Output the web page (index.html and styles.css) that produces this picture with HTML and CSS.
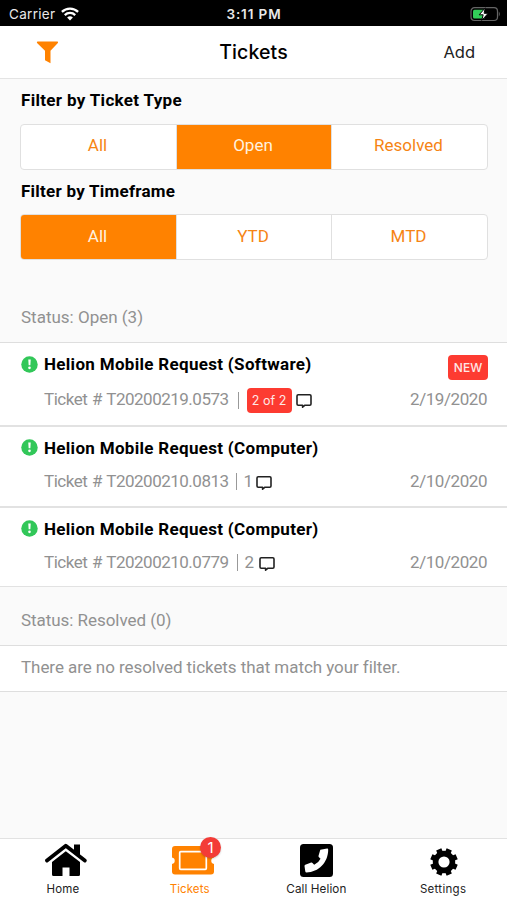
FILE: index.html
```html
<!DOCTYPE html>
<html lang="en">
<head>
<meta charset="utf-8">
<title>Tickets</title>
<link rel="stylesheet" href="styles.css">
</head>
<body>
<svg class="defs" width="0" height="0">
  <symbol id="alert" viewBox="0 0 18 18"><circle cx="9" cy="9" r="8.7" fill="#32c759"/><path d="M7.7 3.8h2.6l-.4 6.1H8.1z" fill="#fff"/><circle cx="9" cy="12.5" r="1.4" fill="#fff"/></symbol>
  <symbol id="bubble" viewBox="0 0 16 16"><path d="M2.2 1.800h11.600q1.200 0 1.200 1.200v8q0 1.200-1.200 1.200H9l-2.400 2v-2H2.200Q1 12.200 1 11V3q0-1.200 1.200-1.200z" fill="none" stroke="#222" stroke-width="1.600" stroke-linejoin="round"/></symbol>
</svg>
<div class="app">
  <div class="statusbar">
    <div class="carrier"><span>Carrier</span>
      <svg width="18" height="14" viewBox="0 0 18 14"><g fill="none" stroke="#fff" stroke-width="2.300"><path d="M.9 4.900a11.700 11.700 0 0 1 16.200 0"/><path d="M3.800 8.100a7.400 7.400 0 0 1 10.400 0"/></g><path d="M9 13.600 6.100 10.600a4.200 4.200 0 0 1 5.800 0z" fill="#fff"/></svg>
    </div>
    <div class="clock">3:11 PM</div>
    <div class="battery"><svg width="31" height="16" viewBox="0 0 31 16"><rect x="1" y="1.700" width="26.500" height="12.800" rx="3.500" fill="none" stroke="#656565" stroke-width="1.200"/><rect x="3" y="3.700" width="12" height="8.800" rx="1.500" fill="#32d059"/><path d="M28.800 5.500q2 2.500 0 5z" fill="#656565"/><path d="M15.300 1.800 9.200 8.800h4l-1.500 5.600 6.500-7.100h-4.100z" fill="#fff" stroke="#000" stroke-width="1"/></svg></div>
  </div>
  <header class="nav">
    <div class="nav-filter"><svg width="24" height="24" viewBox="0 0 24 24"><path d="M1.300 1.500h20.400l.4 1.200-7.600 8v12.600L9 20.300v-9.600L.8 2.700z" fill="#ff8200"/></svg></div>
    <h1 class="nav-title">Tickets</h1>
    <div class="nav-add">Add</div>
  </header>
  <main class="content">
    <section class="filters">
      <h2 class="filter-label type">Filter by Ticket Type</h2>
      <div class="segment"><div>All</div><div class="on">Open</div><div>Resolved</div></div>
      <h2 class="filter-label time">Filter by Timeframe</h2>
      <div class="segment range"><div class="on">All</div><div>YTD</div><div>MTD</div></div>
    </section>
    <div class="group open"><span>Status: Open (3)</span></div>
    <article class="ticket first">
      <div class="line top"><svg class="alert"><use href="#alert"/></svg><h3 class="soft">Helion Mobile Request (Software)</h3><span class="badge new">NEW</span></div>
      <div class="line meta"><span class="num">Ticket # T20200219.0573</span><i class="bar"></i><span class="badge count">2 of 2</span><svg class="bubble"><use href="#bubble"/></svg><time>2/19/2020</time></div>
    </article>
    <article class="ticket second">
      <div class="line top"><svg class="alert"><use href="#alert"/></svg><h3>Helion Mobile Request (Computer)</h3></div>
      <div class="line meta"><span class="num">Ticket # T20200210.0813</span><i class="bar"></i><span class="one">1</span><svg class="bubble"><use href="#bubble"/></svg><time>2/10/2020</time></div>
    </article>
    <article class="ticket third">
      <div class="line top"><svg class="alert"><use href="#alert"/></svg><h3>Helion Mobile Request (Computer)</h3></div>
      <div class="line meta"><span class="num">Ticket # T20200210.0779</span><i class="bar"></i><span class="two">2</span><svg class="bubble"><use href="#bubble"/></svg><time>2/10/2020</time></div>
    </article>
    <div class="group resolved"><span>Status: Resolved (0)</span></div>
    <p class="empty"><span>There are no resolved tickets that match your filter.</span></p>
  </main>
  <nav class="tabs">
    <div class="tab"><div class="icon"><svg width="42" height="34" viewBox="0 0 42 34"><path d="M2 17.500 20.800 2.800 39.800 17.500" fill="none" stroke="#000" stroke-width="3.800" stroke-linecap="round" stroke-linejoin="round"/><path d="M29 1.500h6V14l-6-5z" fill="#000"/><path d="M7 19 20.800 8.200 35 19v12.500q0 1.500-1.500 1.500h-9v-8.500h-7V33h-9Q7 33 7 31.500z" fill="#000"/></svg></div><span class="t-home">Home</span></div>
    <div class="tab active"><div class="icon"><svg width="42" height="29" viewBox="0 0 42 29"><path d="M3 0h36q3 0 3 3v8.500a3.300 3.300 0 0 0 0 6.500v7.500q0 3-3 3H3q-3 0-3-3V18a3.300 3.300 0 0 0 0-6.500V3q0-3 3-3z" fill="#ff8200"/><rect x="7.700" y="5.700" width="26.600" height="17.600" rx="1" fill="none" stroke="#fff" stroke-width="1.700"/></svg><b class="dot">1</b></div><span class="t-tickets">Tickets</span></div>
    <div class="tab"><div class="icon"><svg width="33" height="33" viewBox="0 0 33 33"><rect width="33" height="33" rx="3.500" fill="#000"/><path d="M20.300 5.700 27.200 4.600q1 0 1 1.200C28.200 18.500 18.500 28.300 6.500 28.500q-1 0-1.200-1L4.500 22q0-.8.800-1.200l5.900-2.300q.8-.2 1.300.4l1.700 1.900q4.500-2 6.300-6l-1.700-1.900q-.6-.6-.2-1.400z" fill="#fff"/></svg></div><span class="t-call">Call Helion</span></div>
    <div class="tab"><div class="icon"><svg width="28" height="28" viewBox="-14 -14 28 28"><circle r="8.400" fill="none" stroke="#000" stroke-width="5.600"/><g fill="none" stroke="#000" stroke-width="5.600"><path d="M0-9V-13.700M0 9V13.700M-9 0H-13.700M9 0H13.700M-6.400-6.400-9.700-9.700M6.400-6.400 9.700-9.700M-6.400 6.400-9.700 9.700M6.400 6.400 9.700 9.700" transform="rotate(22.500)"/></g></svg></div><span class="t-settings">Settings</span></div>
  </nav>
</div>
</body>
</html>
```
FILE: styles.css
```css
* { box-sizing: border-box; }
body { margin: 0; }
h1, h2, h3, p { margin: 0; }
.defs { display: none; }
.app { width: 507px; height: 900px; display: flex; flex-direction: column; background: #fafafa; font-family: Roboto, sans-serif; font-size: 17px; color: #000; white-space: nowrap; overflow: hidden; }
.statusbar { height: 26px; flex: none; background: #000; color: #e8e8e8; display: grid; grid-template-columns: 1fr auto 1fr; align-items: center; padding: 1px 6px 0 9px; font-family: Inter, sans-serif; font-size: 13.500px; letter-spacing: .3px; }
.carrier { display: flex; align-items: center; gap: 6px; }
.clock { font-weight: 600; font-size: 13.500px; letter-spacing: .9px; position: relative; left: -1px; }
.battery { display: flex; justify-content: flex-end; }
.nav { height: 53px; flex: none; background: #fff; border-bottom: 1px solid #e4e4e4; display: grid; grid-template-columns: 1fr auto 1fr; align-items: center; padding: 0 32px 0 36px; font-family: Inter, sans-serif; }
.nav-filter, .nav-filter svg { display: block; }
.nav-title { font-size: 19.500px; font-weight: 500; letter-spacing: .1px; position: relative; left: -2px; }
.nav-add { text-align: right; font-size: 16.500px; color: #222; }
.content { flex: 1; display: flex; flex-direction: column; }
.filters { padding: 0 19px 0 20px; }
.filter-label { font-size: 17px; font-weight: 700; letter-spacing: .32px; padding-left: 1px; height: 45px; line-height: 43px; }
.segment { height: 46px; display: grid; grid-template-columns: 155px 155px 156px; border: 1px solid #e0e0e0; border-radius: 4px; background: #fff; overflow: hidden; color: #f68413; text-align: center; line-height: 40px; font-size: 17px; }
.segment div { padding-right: 2px; }
.segment.range { line-height: 42px; }
.segment div + div { border-left: 1px solid #e0e0e0; }
.segment .on { background: #ff8200; color: #fff1df; }
.filter-label.time { height: 45px; line-height: 42px; letter-spacing: .25px; margin-bottom: -1px; }
.group { flex: none; color: #919191; padding-left: 21px; border-bottom: 1px solid #dedede; }
.group.open { height: 83px; line-height: 115px; }
.group.resolved { height: 59px; line-height: 66px; letter-spacing: -.05px; }
.ticket { flex: none; background: #fff; border-bottom: 2px solid #e2e2e2; padding: 0 20px 0 21px; }
.ticket.first { height: 84px; }
.ticket.second { height: 81px; }
.ticket.third { height: 79px; border-bottom-width: 1px; }
.line { display: flex; align-items: center; }
.top { height: 42px; }
.second .top, .third .top { height: 41px; }
.alert { width: 17px; height: 17px; margin-right: 6px; }
h3 { font-size: 17px; font-weight: 700; letter-spacing: .31px; }
.badge { background: #fd3b31; color: #ffe8e6; border-radius: 4px; height: 25px; line-height: 26px; font-size: 12.500px; text-align: center; font-family: Inter, sans-serif; }
.new { width: 40px; margin-left: auto; margin-right: -1px; margin-top: 7px; font-weight: 500; font-size: 12px; }
.meta { height: 30px; padding-left: 23px; color: #919191; }
.num, time { letter-spacing: -.44px; }
.num { word-spacing: 1px; letter-spacing: -.5px; }
.first .num, .first time { margin-top: -2px; }
.second .meta, .third .meta { height: 26px; }
.bar { width: 1px; height: 17px; background: #999; margin: 0 7px 0 9px; }
.second .bar { margin-left: 7px; }
.third .bar { margin-left: 8px; }
.count { width: 45px; margin-left: 1px; margin-right: 4px; }
.one { margin-right: 3px; }
.two { margin-right: 5px; }
.bubble { width: 16px; height: 16px; margin-top: 3px; }
.first .bubble { margin-top: 1px; }
time { margin-left: auto; }
.empty { height: 46px; background: #fff; border-bottom: 1px solid #dedede; color: #919191; padding-left: 21px; line-height: 42px; letter-spacing: -.06px; }
.tabs { height: 62px; flex: none; background: #fff; border-top: 1px solid #e2e2e2; display: grid; grid-template-columns: repeat(4, 1fr); font-family: Inter, sans-serif; font-size: 11.500px; color: #222; }
.tab { display: flex; flex-direction: column; align-items: center; }
.icon { height: 42px; display: flex; align-items: center; position: relative; }
.tab:first-child .icon { left: 3px; }
.tab:nth-child(2) .icon { left: 3px; }
.tab:nth-child(4) .icon { top: 2px; }
.tab span { line-height: 16px; letter-spacing: .1px; position: relative; left: -.5px; }
.t-call { font-size: 11.700px; }
.tab .t-settings { letter-spacing: .3px; }
.active { color: #ff8200; }
.dot { position: absolute; right: -7px; top: -2px; width: 21px; height: 21px; border-radius: 50%; background: #f33c37; color: #fff; font-weight: 400; font-size: 15px; line-height: 21px; text-align: center; box-shadow: 0 1px 2px #0003; }
```
